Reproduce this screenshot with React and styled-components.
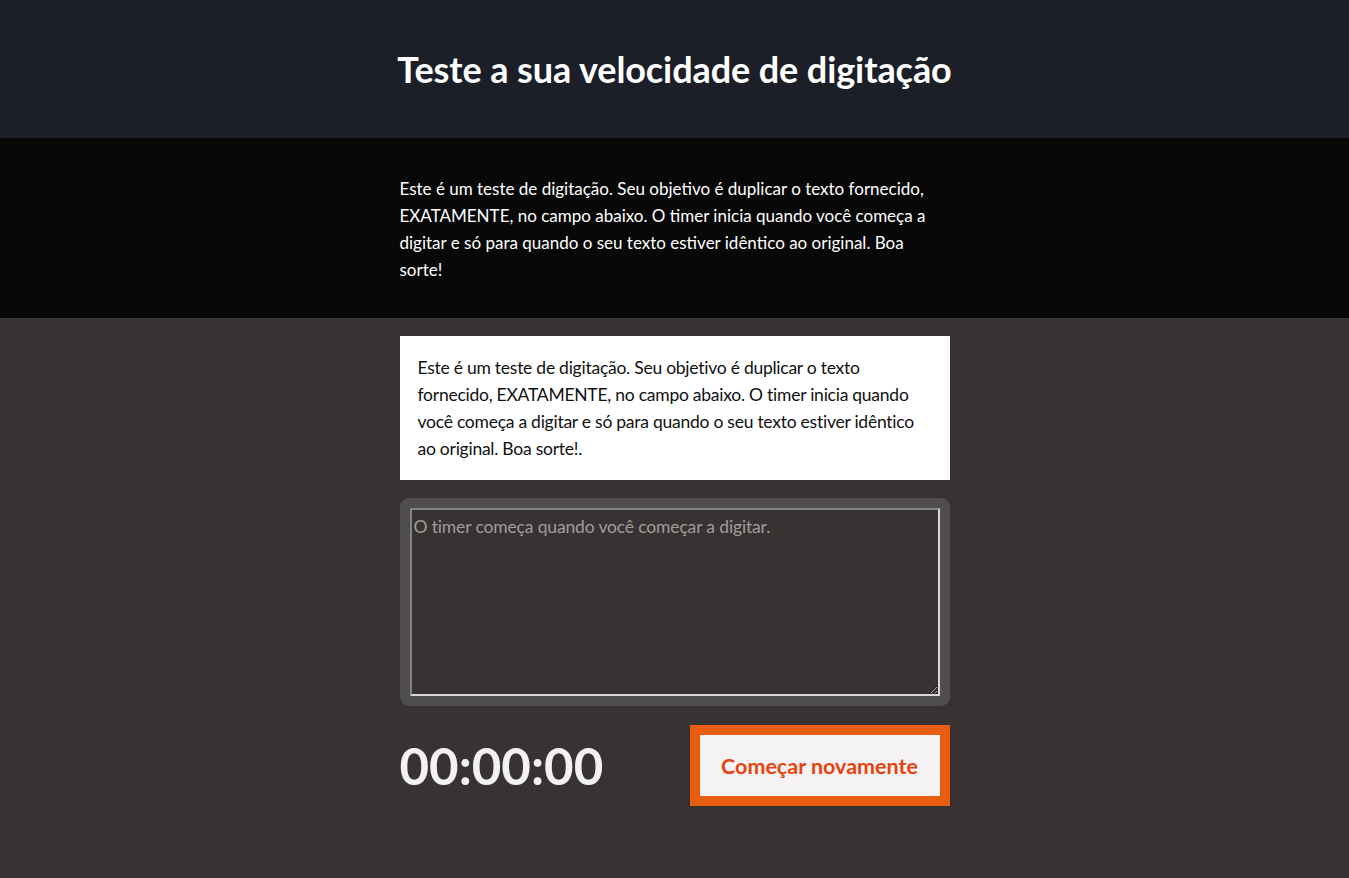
import styled, { createGlobalStyle } from 'styled-components';

const GlobalStyle = createGlobalStyle`
  html, body {
    margin: 0;
    padding: 0;
    background: #383232;
    font-family: 'Lato', 'Noto Sans', sans-serif;
  }
`;

const Header = styled.header`
  background-color: #1c1f27;
  height: 138px;
  display: flex;
  align-items: center;
  justify-content: center;
`;

const Title = styled.h1`
  margin: 0;
  color: #ffffff;
  font-size: 36px;
  font-weight: 700;
  letter-spacing: -0.1px;
`;

const Intro = styled.section`
  background-color: #080808;
  height: 180px;
  box-sizing: border-box;
  padding-top: 37px;
`;

const Wrapper = styled.div`
  width: 550px;
  margin: 0 auto;
`;

const IntroText = styled.p`
  margin: 0;
  color: #ffffff;
  font-size: 17px;
  line-height: 27px;
  padding-right: 10px;
`;

const Main = styled.main`
  padding: 18px 0 60px;
`;

const Sample = styled.div`
  background: #ffffff;
  color: #111;
  padding: 18px;
  font-size: 17.5px;
  line-height: 27px;
  letter-spacing: -0.25px;
`;

const InputBox = styled.div`
  margin-top: 18px;
  background: #4f4d4d;
  border-radius: 9px;
  padding: 10px;
  height: 208px;
  box-sizing: border-box;
  display: flex;
`;

const Area = styled.textarea`
  flex: 1;
  background: #383232;
  border: 2px inset #d8d8d8;
  color: #f2f2f2;
  font-family: 'Lato', 'Noto Sans', sans-serif;
  font-size: 17.5px;
  letter-spacing: -0.15px;
  padding: 6px 2px 2px;
  outline: none;

  &::placeholder {
    color: #a09c9c;
  }
`;

const Controls = styled.div`
  margin-top: 19px;
  display: flex;
  align-items: center;
  justify-content: space-between;
`;

const Timer = styled.div`
  color: #f2f2f2;
  font-size: 51px;
  font-weight: 700;
`;

const RestartButton = styled.button`
  width: 260px;
  height: 81px;
  box-sizing: border-box;
  border: 10px solid #e85d10;
  background: #f4f2f3;
  color: #e8420f;
  font-family: 'Lato', 'Noto Sans', sans-serif;
  font-size: 21.5px;
  font-weight: 700;
  cursor: pointer;
`;

const App = () => {
  return (
    <>
      <GlobalStyle />
      <Header>
        <Title>Teste a sua velocidade de digitação</Title>
      </Header>
      <Intro>
        <Wrapper>
          <IntroText>
            Este é um teste de digitação. Seu objetivo é duplicar o texto fornecido,
            EXATAMENTE, no campo abaixo. O timer inicia quando você começa a
            digitar e só para quando o seu texto estiver idêntico ao original. Boa
            sorte!
          </IntroText>
        </Wrapper>
      </Intro>
      <Main>
        <Wrapper>
          <Sample>
            Este é um teste de digitação. Seu objetivo é duplicar o texto
            fornecido, EXATAMENTE, no campo abaixo. O timer inicia quando
            você começa a digitar e só para quando o seu texto estiver idêntico
            ao original. Boa sorte!.
          </Sample>
          <InputBox>
            <Area placeholder="O timer começa quando você começar a digitar." />
          </InputBox>
          <Controls>
            <Timer>00:00:00</Timer>
            <RestartButton>Começar novamente</RestartButton>
          </Controls>
        </Wrapper>
      </Main>
    </>
  );
};

export default App;
